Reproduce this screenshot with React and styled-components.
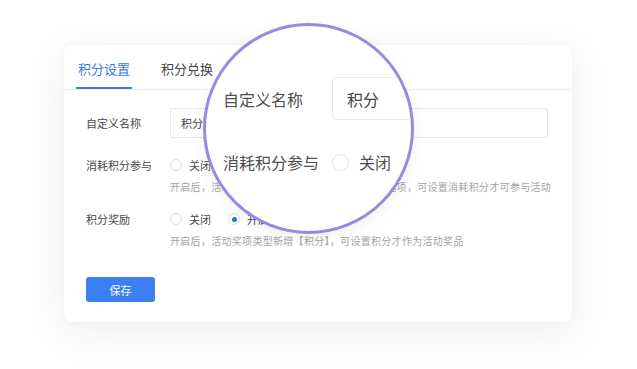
import React from "react";
import styled, { createGlobalStyle } from "styled-components";

const GlobalStyle = createGlobalStyle`
    body {
        margin: 0;
        background: #ffffff;
        font-family: "Noto Sans CJK SC", "Noto Sans", sans-serif;
    }
`;

const Page = styled.div`
    width: 637px;
    height: 369px;
    padding: 45px 0 0 64px;
    box-sizing: border-box;
    overflow: hidden;
`;

const Card = styled.div`
    position: relative;
    width: 508px;
    background: #fff;
    border-radius: 8px;
    box-shadow: 0 10px 40px rgba(0, 0, 0, 0.07), 0 0 8px rgba(0, 0, 0, 0.03);
`;

const TabBar = styled.div`
    display: flex;
    gap: 27px;
    height: 44px;
    padding-left: 12px;
    border-bottom: 1px solid #eeeeee;
`;

const Tab = styled.div`
    box-sizing: border-box;
    height: 44px;
    padding: 4px 2px 0;
    display: flex;
    align-items: center;
    font-size: 13px;
    color: ${(p) => (p.active ? "#3b7bd8" : "#444")};
    border-bottom: 2px solid ${(p) => (p.active ? "#3b7bd8" : "transparent")};
`;

const Form = styled.div`
    padding: 18px 24px 20px 22px;
`;

const Row = styled.div`
    display: grid;
    grid-template-columns: 84px 1fr;
    align-items: ${(p) => (p.top ? "start" : "center")};
    margin-top: ${(p) => p.gap || 0}px;
`;

const Label = styled.div`
    font-size: 11px;
    line-height: ${(p) => (p.top ? "20px" : "normal")};
    color: #4a4a4a;
`;

const Input = styled.div`
    height: 30px;
    box-sizing: border-box;
    border: 1px solid #e6e6e6;
    border-radius: 3px;
    padding-left: 10px;
    display: flex;
    align-items: center;
    font-size: 11px;
    color: #444;
`;

const Options = styled.div`
    display: flex;
    align-items: center;
    height: 20px;
`;

const Option = styled.div`
    display: flex;
    align-items: center;
    gap: 7px;
    margin-right: 17px;
    font-size: 11px;
    color: #4a4a4a;
`;

const Radio = styled.span`
    width: ${(p) => p.size || 12}px;
    height: ${(p) => p.size || 12}px;
    box-sizing: border-box;
    border-radius: 50%;
    border: 1px solid #e0e0e0;
    background: #fff;
    display: flex;
    align-items: center;
    justify-content: center;
    &::after {
        content: "";
        width: 5px;
        height: 5px;
        border-radius: 50%;
        background: ${(p) => (p.checked ? "#2f72dc" : "transparent")};
    }
`;

const Hint = styled.div`
    margin-top: 5px;
    font-size: 10px;
    line-height: 14px;
    letter-spacing: 0.3px;
    color: #a4a4a4;
    white-space: nowrap;
`;

const SaveButton = styled.button`
    margin-top: 29px;
    width: 69px;
    height: 25px;
    border: none;
    border-radius: 3px;
    background: #3c80f4;
    color: #fff;
    font-family: inherit;
    font-size: 11px;
    padding: 0;
`;

/* magnifier lens laid over the card */
const Lens = styled.div`
    position: absolute;
    left: 139px;
    top: -22px;
    width: 211px;
    height: 211px;
    box-sizing: border-box;
    border-radius: 50%;
    border: 3px solid #9b87e4;
    background: #fff;
    overflow: hidden;
    box-shadow: 0 4px 14px rgba(0, 0, 0, 0.06);
    padding: 51px 0 0 17px;
`;

const LensRow = styled.div`
    display: flex;
    align-items: center;
    height: ${(p) => p.h}px;
    margin-top: ${(p) => p.gap || 0}px;
`;

const LensLabel = styled.div`
    width: 109px;
    flex: none;
    font-size: 16px;
    color: #4f4f4f;
`;

const LensInput = styled.div`
    flex: none;
    width: 200px;
    height: 43px;
    box-sizing: border-box;
    border: 1px solid #e8e8e8;
    border-radius: 4px;
    padding-left: 14px;
    display: flex;
    align-items: center;
    font-size: 16px;
    color: #444;
`;

const LensOption = styled.div`
    display: flex;
    align-items: center;
    gap: 10px;
    font-size: 16px;
    color: #4f4f4f;
`;

export default function App() {
    return (
        <Page>
            <GlobalStyle />
            <Card>
                <TabBar>
                    <Tab active>积分设置</Tab>
                    <Tab>积分兑换</Tab>
                </TabBar>
                <Form>
                    <Row>
                        <Label>自定义名称</Label>
                        <Input>积分</Input>
                    </Row>
                    <Row top gap={17}>
                        <Label top>消耗积分参与</Label>
                        <div>
                            <Options>
                                <Option><Radio />关闭</Option>
                            </Options>
                            <Hint>开启后，活动参与条件中新增【消耗积分参与】选项，可设置消耗积分才可参与活动</Hint>
                        </div>
                    </Row>
                    <Row top gap={15}>
                        <Label top>积分奖励</Label>
                        <div>
                            <Options>
                                <Option><Radio />关闭</Option>
                                <Option><Radio checked />开启</Option>
                            </Options>
                            <Hint>开启后，活动奖项类型新增【积分】，可设置积分才作为活动奖品</Hint>
                        </div>
                    </Row>
                    <SaveButton>保存</SaveButton>
                </Form>
                <Lens>
                    <LensRow h={43}>
                        <LensLabel>自定义名称</LensLabel>
                        <LensInput>积分</LensInput>
                    </LensRow>
                    <LensRow h={22} gap={31}>
                        <LensLabel>消耗积分参与</LensLabel>
                        <LensOption><Radio size={17} />关闭</LensOption>
                    </LensRow>
                </Lens>
            </Card>
        </Page>
    );
}
